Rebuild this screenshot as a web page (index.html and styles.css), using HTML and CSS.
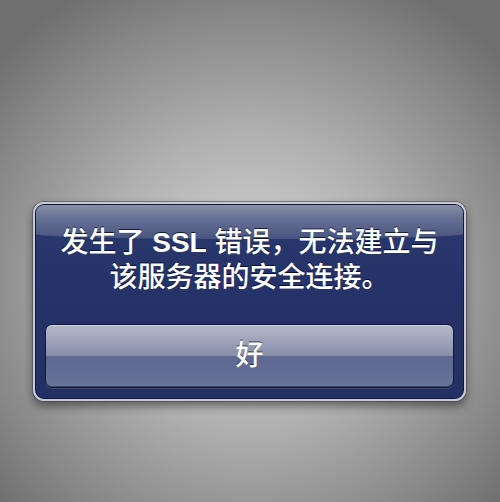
FILE: index.html
```html
<!DOCTYPE html>
<html lang="zh-CN">
<head>
<meta charset="utf-8">
<title>SSL 错误</title>
<link rel="stylesheet" href="styles.css">
</head>
<body>
<div class="alert">
  <p class="msg">发生了 <span class="latin">SSL</span> 错误，无法建立与<br>该服务器的安全连接。</p>
  <button class="btn">好</button>
</div>
</body>
</html>
```
FILE: styles.css
```css
html, body {
  margin: 0;
  height: 100%;
}
body {
  width: 500px;
  height: 502px;
  overflow: hidden;
  background: radial-gradient(ellipse 340px 330px at 50% 56%, #d8d8d8 0%, #b0b0b0 45%, #888888 80%, #6f6f6f 100%);
  background-color: #737373;
  padding-top: 202px;
  box-sizing: border-box;
  font-family: "Liberation Sans", "Noto Sans CJK SC", sans-serif;
}
.alert {
  position: relative;
  box-sizing: border-box;
  width: 433px;
  height: 199px;
  margin-left: 33px;
  padding: 21px 10px 11px;
  border: 2px solid #c6c9d3;
  border-radius: 11px;
  background: linear-gradient(to bottom, #2a396e 0%, #25336a 40%, #223063 100%);
  box-shadow: 0 0 0 1px rgba(70,70,75,0.55), inset 0 0 0 1px rgba(15,20,45,0.85), 0 5px 10px rgba(0,0,0,0.45);
  display: flex;
  flex-direction: column;
}
.alert::before {
  content: "";
  position: absolute;
  top: 1px;
  left: 1px;
  right: 1px;
  height: 34px;
  border-radius: 8px 8px 50% 50% / 8px 8px 5px 5px;
  background: linear-gradient(to bottom, #9096ad 0%, #6c7598 40%, #4a5682 100%);
  opacity: 0.92;
}
.msg {
  position: relative;
  margin: 0 0 29px;
  height: 70px;
  line-height: 35px;
  font-size: 28px;
  font-weight: 500;
  color: #ffffff;
  text-align: center;
  text-shadow: 0 -1px 0 rgba(0,0,0,0.7);
  letter-spacing: 0;
}
.latin {
  font-weight: bold;
}
.btn {
  height: 64px;
  width: 100%;
  margin: 0;
  padding: 0;
  border: 1px solid #141a36;
  border-radius: 7px;
  background: linear-gradient(to bottom, #b4b8c9 0%, #9ea4ba 25%, #878fa9 49%, #5d6990 51%, #626e95 80%, #6a769b 100%);
  box-shadow: inset 0 1px 0 rgba(255,255,255,0.35), inset 0 -1px 0 rgba(20,25,50,0.5), 0 1px 0 rgba(110,120,160,0.35);
  color: #ffffff;
  font-family: "Liberation Sans", "Noto Sans CJK SC", sans-serif;
  font-size: 28px;
  font-weight: 500;
  line-height: 62px;
  text-shadow: 0 -1px 0 rgba(0,0,0,0.7);
  cursor: pointer;
}
```
